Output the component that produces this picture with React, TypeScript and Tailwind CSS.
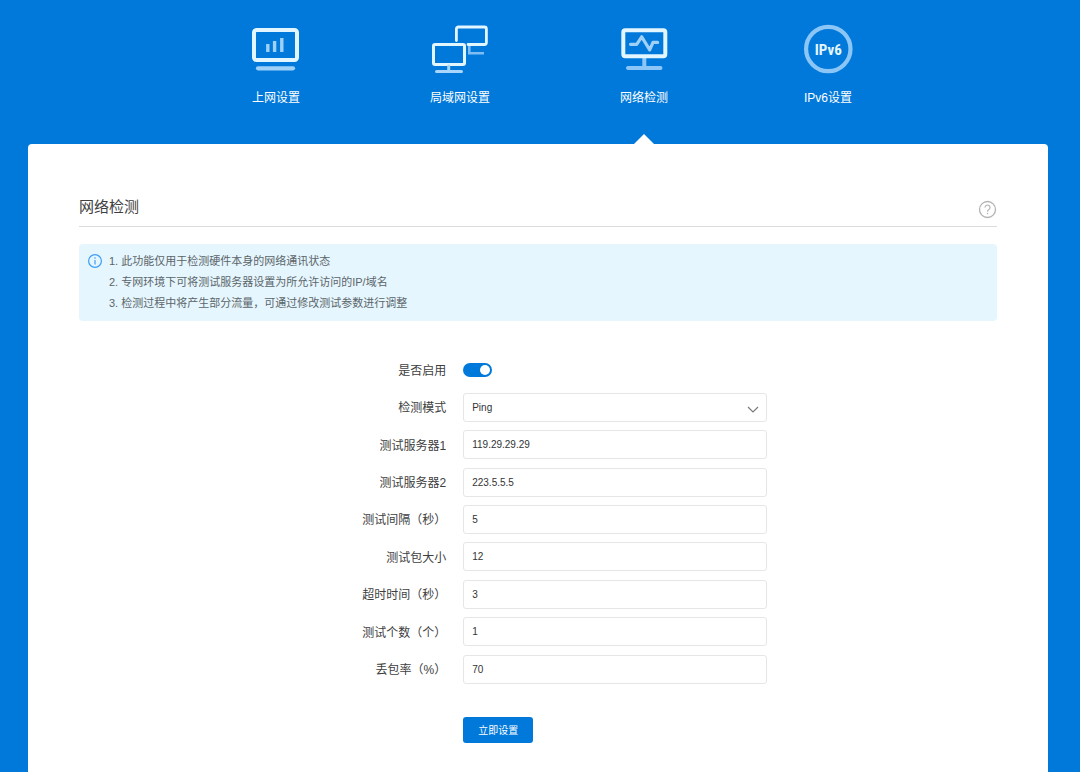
import React, { useState } from 'react';

const WanIcon = () => (
  <svg width="60" height="52" viewBox="0 0 60 52" fill="none">
    <rect x="8" y="6" width="43" height="30" rx="2.5" stroke="#e2f6ff" strokeWidth="4" />
    <path d="M21.8 20v8M28.6 17v11M35.8 14v14" stroke="#9fd0f8" strokeWidth="3.4" />
    <path d="M12 44.3h35" stroke="#9fd0f8" strokeWidth="4.2" strokeLinecap="round" />
  </svg>
);

const LanIcon = () => (
  <svg width="60" height="52" viewBox="0 0 60 52" fill="none">
    <path d="M26.4 16.5V5a2 2 0 0 1 2-2h26a2 2 0 0 1 2 2v13.5a2 2 0 0 1-2 2H38" stroke="#e2f6ff" strokeWidth="2.8" strokeLinecap="round" />
    <path d="M39.3 22v7.3H54" stroke="#7fbdf3" strokeWidth="2.6" />
    <rect x="3.5" y="20.5" width="31" height="20" rx="1.5" stroke="#e2f6ff" strokeWidth="3" />
    <path d="M18.7 42v5M6.5 47.6h25" stroke="#a9d6fa" strokeWidth="3" strokeLinecap="round" />
  </svg>
);

const DetectIcon = () => (
  <svg width="60" height="52" viewBox="0 0 60 52" fill="none">
    <path d="M30.3 34v10M14 44h32.5" stroke="#8cc6f7" strokeWidth="4" strokeLinecap="round" />
    <rect x="9.3" y="6.3" width="42" height="26" rx="2" stroke="#e2f6ff" strokeWidth="4" />
    <path d="M16.5 20.3h6.2l5-7.5 8 13 3.3-7.4h4.6" stroke="#9fd0f8" strokeWidth="3.2" strokeLinecap="round" strokeLinejoin="round" />
  </svg>
);

const Ipv6Icon = () => (
  <svg width="60" height="52" viewBox="0 0 60 52" fill="none">
    <circle cx="30.3" cy="25" r="22.2" stroke="#8cc6f7" strokeWidth="4.2" />
    <text x="30.3" y="31" textAnchor="middle" fill="#e2f6ff" className="font-['Liberation_Sans_Narrow','Roboto_Condensed','Open_Sans_Condensed','Liberation_Sans',sans-serif] text-[15px] font-bold">IPv6</text>
  </svg>
);

const navItems = [
  { name: '上网设置', href: '#wan', icon: <WanIcon /> },
  { name: '局域网设置', href: '#lan', icon: <LanIcon /> },
  { name: '网络检测', href: '#detect', icon: <DetectIcon />, active: true },
  { name: 'IPv6设置', href: '#ipv6', icon: <Ipv6Icon /> },
];

const tips = [
  '1. 此功能仅用于检测硬件本身的网络通讯状态',
  '2. 专网环境下可将测试服务器设置为所允许访问的IP/域名',
  '3. 检测过程中将产生部分流量，可通过修改测试参数进行调整',
];

const fields = [
  { id: 'server1', label: '测试服务器1', value: '119.29.29.29' },
  { id: 'server2', label: '测试服务器2', value: '223.5.5.5' },
  { id: 'interval', label: '测试间隔（秒）', value: '5' },
  { id: 'size', label: '测试包大小', value: '12' },
  { id: 'timeout', label: '超时时间（秒）', value: '3' },
  { id: 'count', label: '测试个数（个）', value: '1' },
  { id: 'loss', label: '丢包率（%）', value: '70' },
];

const controlClass =
  'h-[29px] w-full appearance-none rounded-[3px] border border-[#e6e6e6] bg-white px-2 text-[10px] text-[#333] outline-none focus:border-[#0079da]';

const Row = ({ id, label, children }: { id: string; label: string; children: React.ReactNode }) => (
  <div className="flex items-center gap-[17px]">
    <label htmlFor={id} className="w-2/5 pt-0.5 text-right text-xs text-[#404040]">{label}</label>
    <div className="relative flex w-1/3 max-w-[304px] items-center">{children}</div>
  </div>
);

const App = () => {
  const [enabled, setEnabled] = useState(true);

  return (
    <div className="flex min-h-screen flex-col bg-[#0079da] pr-8 pl-7 font-['Liberation_Sans','Noto_Sans_CJK_SC',sans-serif]">
      <nav className="grid grid-cols-4 pt-6 pr-32 pl-[156px]">
        {navItems.map((item) => (
          <a key={item.name} href={item.href} className="flex flex-col items-center text-xs text-white">
            {item.icon}
            <span className="mt-3 leading-5">{item.name}</span>
            {/* Pointer under the current tab */}
            <svg width="20" height="10" viewBox="0 0 20 10" className="mt-[26px]">
              {item.active && <path d="M10 0l10 10H0z" fill="#fff" />}
            </svg>
          </a>
        ))}
      </nav>

      <main className="flex-1 rounded-t bg-white px-[51px] pt-12 pb-7">
        <div className="flex items-center justify-between border-b border-[#dcdcdc] pb-1">
          <h1 className="text-[15px] leading-[30px] text-[#404040]">网络检测</h1>
          <button type="button" aria-label="帮助" className="mt-1 cursor-pointer">
            <svg width="19" height="19" viewBox="0 0 19 19" fill="none" stroke="#b3b3b3">
              <circle cx="9.5" cy="9.5" r="8" strokeWidth="1.3" />
              <path d="M7 7.6a2.5 2.5 0 1 1 3.9 2c-.9.6-1.4 1-1.4 2.1" strokeWidth="1.2" />
              <path d="M9.5 12.8v1.4" strokeWidth="1.3" />
            </svg>
          </button>
        </div>

        <div className="mt-[17px] flex gap-1.5 rounded bg-[#e5f6fe] px-2 py-[7px]">
          <svg width="16" height="16" viewBox="0 0 16 16" fill="none" stroke="#3f9df5" className="mt-0.5 shrink-0">
            <circle cx="8" cy="8" r="6.4" strokeWidth="1.2" />
            <path d="M8 7v4.5M8 4.3v1.4" strokeWidth="1.2" />
          </svg>
          <ul className="text-[11px] leading-[21px] text-[#5c6569]">
            {tips.map((tip) => (
              <li key={tip}>{tip}</li>
            ))}
          </ul>
        </div>

        <form className="mt-[30px]" onSubmit={(e) => e.preventDefault()}>
          <div className="grid min-h-[337px] auto-rows-fr">
            <Row id="enabled" label="是否启用">
              <input
                id="enabled"
                type="checkbox"
                role="switch"
                checked={enabled}
                onChange={(e) => setEnabled(e.target.checked)}
                className="flex h-[14px] w-[29px] cursor-pointer appearance-none items-center rounded-full bg-[#c4c4c4] px-0.5 before:size-[10px] before:rounded-full before:bg-white checked:justify-end checked:bg-[#0079da]"
              />
            </Row>
            <Row id="mode" label="检测模式">
              <select id="mode" defaultValue="Ping" className={controlClass}>
                <option>Ping</option>
              </select>
              <svg width="12" height="7" viewBox="0 0 12 7" fill="none" stroke="#777" strokeWidth="1.1" className="pointer-events-none absolute right-2 mt-1">
                <path d="M1 1l5 5 5-5" />
              </svg>
            </Row>
            {fields.map((field) => (
              <Row key={field.id} id={field.id} label={field.label}>
                <input id={field.id} type="text" defaultValue={field.value} className={controlClass} />
              </Row>
            ))}
          </div>

          <div className="mt-[29px] flex gap-[17px]">
            <div className="w-2/5" />
            <button type="submit" className="h-[26px] cursor-pointer rounded-[3px] bg-[#0079da] px-[15px] text-[10px] text-white">
              立即设置
            </button>
          </div>
        </form>
      </main>
    </div>
  );
};

export default App;
